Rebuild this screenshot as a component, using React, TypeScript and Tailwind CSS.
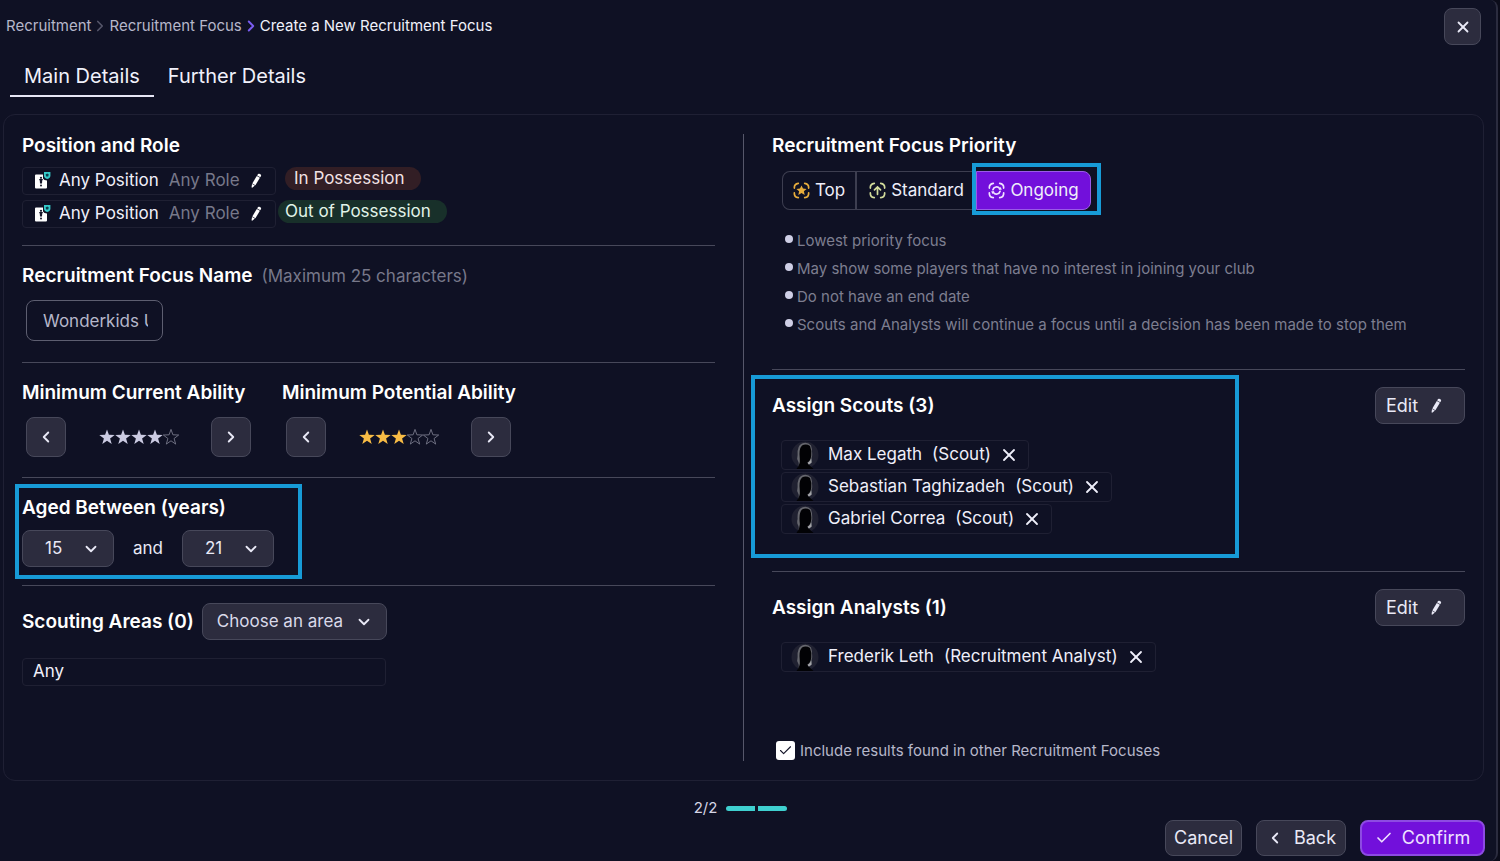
import { useState } from "react";
import type { ReactNode } from "react";
import { Check, ChevronDown, ChevronLeft, ChevronRight, X } from "lucide-react";

const buttonLook =
  "rounded-lg border border-[#47485a] bg-[#2c2c3e] text-[#e9e9f6] flex items-center justify-center";

function Pencil() {
  return (
    <svg viewBox="0 0 12 18" className="h-[18px] w-3" fill="currentColor" aria-hidden="true">
      <path d="M7.2 3.4 8 2.1Q8.6 1.4 9.4 1.8L10.7 2.6Q11.4 3.1 11 3.9L10.3 5.2Z" />
      <path d="M6.8 4 9.9 5.8 5.4 13.2 2.3 11.4Z" />
      <path d="M2 11.9 4.9 13.6 2.5 15.6Q1.6 16.2 1.6 15.1Z" />
    </svg>
  );
}

function PositionIcon() {
  return (
    <svg viewBox="0 0 17 18" className="h-[18px] w-[17px]" aria-hidden="true">
      <path d="M2 2.4H9V6.5Q10 8.4 13 8.4V15.4Q13 16.4 12 16.4H2Q1 16.4 1 15.4V3.4Q1 2.4 2 2.4Z" fill="#fff" />
      <circle cx="7" cy="5.8" r="1.1" fill="#15162a" />
      <path d="M5 7H9L8.2 8.8 8 11.4H6L5.8 8.8Z" fill="#15162a" />
      <circle cx="7" cy="13.6" r="1" fill="#15162a" />
      <path d="M10 0H16.4V3.8Q16.4 6.2 13.2 7Q10 6.2 10 3.8Z" fill="#35c9c9" />
      <path d="M13.2 1.4 14.8 2.6 14.2 4.6H12.2L11.6 2.6Z" fill="#0f3d4c" />
    </svg>
  );
}

function FocusIcon({ kind }: { kind: "top" | "standard" | "ongoing" }) {
  const color = kind === "top" ? "#e8ad3c" : kind === "standard" ? "#d3dc9b" : "#f0e4ff";
  return (
    <svg viewBox="0 0 18 18" className="h-[17px] w-[17px]" fill="none" stroke={color} strokeWidth="1.8" strokeLinecap="round" aria-hidden="true">
      <path d="M1.4 6.4Q1.2 1.9 5.6 1.4M12.4 1.4Q16.8 1.9 16.6 6.4M16.6 11.6Q16.8 16.1 12.4 16.6M5.6 16.6Q1.2 16.1 1.4 11.6" />
      {kind === "top" && (
        <path d="M9 3.6 10.6 7 14.4 7.4 11.5 9.9 12.4 13.7 9 11.7 5.6 13.7 6.5 9.9 3.6 7.4 7.4 7Z" fill={color} stroke="none" />
      )}
      {kind === "standard" && <path d="M9 13V5.6M5.8 8.4 9 5.2 12.2 8.4" />}
      {kind === "ongoing" && (
        <>
          <path d="M5.2 8.2A4 4 0 0 1 12.3 6.9M12.8 9.8A4 4 0 0 1 5.7 11.1" />
          <path d="M11.2 8.2H14.6L13.4 5.4ZM6.8 9.8H3.4L4.6 12.6Z" fill={color} stroke="none" />
        </>
      )}
    </svg>
  );
}

function Avatar() {
  return (
    <svg viewBox="0 0 28 28" className="h-7 w-7" aria-hidden="true">
      <circle cx="14" cy="14" r="13.5" fill="#202131" />
      <path d="M7 27Q8.6 22.5 7 20Q5.6 18 6.6 14Q6 4.5 11 2.4Q16.5 .4 20 4.4Q21.4 8 21.2 13Q21.4 15 20.6 17L20.4 22L17 24Z" fill="#66676e" />
      <path d="M5.5 28Q9.4 23 8.8 18Q7.6 8 11 4.6Q15 2.4 19 5Q20.8 9 20.2 15Q19.6 19.6 16.4 21.6L17.6 23.6 22.5 28Z" fill="#020205" />
      <path d="M20.2 17.6Q19.4 20.6 16.6 22L18 23.4 20.6 21.6Z" fill="#a5a6aa" />
    </svg>
  );
}

function Stars({ value, color }: { value: number; color: string }) {
  return (
    <div className="flex" role="img" aria-label={`${value} of 5 stars`}>
      {[1, 2, 3, 4, 5].map((n) => (
        <svg key={n} viewBox="0 0 16 16" className="size-4">
          <path
            d="M8 .4 9.9 5.8 15.7 6 11.1 9.5 12.7 15.1 8 11.8 3.3 15.1 4.9 9.5 .3 6 6.1 5.8Z"
            fill={n <= value ? color : "none"}
            stroke={n <= value ? "none" : "#77788a"}
            strokeWidth="0.9"
          />
        </svg>
      ))}
    </div>
  );
}

function Rating({ title, initial, color }: { title: string; initial: number; color: string }) {
  const [value, setValue] = useState(initial);
  return (
    <div>
      <h2 className="text-[19px] leading-6 font-semibold text-white">{title}</h2>
      <div className="mt-3 ml-1 flex w-[225px] items-center justify-between">
        <button aria-label={`Lower ${title}`} onClick={() => setValue(Math.max(0, value - 1))} className={`${buttonLook} size-10`}>
          <ChevronLeft size={18} strokeWidth={2.5} />
        </button>
        <Stars value={value} color={color} />
        <button aria-label={`Raise ${title}`} onClick={() => setValue(Math.min(5, value + 1))} className={`${buttonLook} size-10`}>
          <ChevronRight size={18} strokeWidth={2.5} />
        </button>
      </div>
    </div>
  );
}

function AgeSelect({ label, initial }: { label: string; initial: number }) {
  const ages = Array.from({ length: 26 }, (_, i) => i + 15);
  return (
    <div className="relative w-[92px]">
      <select
        aria-label={label}
        defaultValue={initial}
        className="h-[37px] w-full appearance-none rounded-lg border border-[#47485a] bg-[#2c2c3e] pl-[22px] text-[17px] text-[#e9e9f6]"
      >
        {ages.map((a) => (
          <option key={a}>{a}</option>
        ))}
      </select>
      <ChevronDown size={18} strokeWidth={2.4} className="pointer-events-none absolute top-[10px] right-[14px] text-[#e9e9f6]" />
    </div>
  );
}

function RoleRow({ phase, tone }: { phase: string; tone: string }) {
  return (
    <div className="flex h-7 items-start">
      <div className="flex h-7 w-[254px] items-center rounded border border-[#1f2033] pl-[11px] text-[17px]">
        <PositionIcon />
        <span className="ml-2 text-[#efeffa]">Any Position</span>
        <span className="ml-[10px] text-[#77788a]">Any Role</span>
        <button aria-label={`Edit role ${phase}`} className="ml-[10px] text-white">
          <Pencil />
        </button>
      </div>
      <span className={`flex h-[23px] items-center rounded-full text-[17px] ${tone}`}>{phase}</span>
    </div>
  );
}

function PersonChip({ name, role }: { name: string; role: string }) {
  return (
    <li className="flex h-[30px] w-fit items-center rounded border border-[#1f2033] pr-[9px] pl-[9px] text-[17px] text-[#efeffa]">
      <Avatar />
      <span className="ml-[9px]">{name}</span>
      <span className="ml-[10px]">({role})</span>
      <button aria-label={`Remove ${name}`} className="ml-2">
        <X size={20} strokeWidth={2.2} />
      </button>
    </li>
  );
}

function AssignSection({ title, children }: { title: string; children: ReactNode }) {
  return (
    <>
      <div className="flex items-center justify-between">
        <h2 className="text-[19px] leading-6 font-semibold text-white">{title}</h2>
        <button className={`${buttonLook} h-[37px] w-[90px] gap-3 pr-3 text-lg`}>
          Edit <Pencil />
        </button>
      </div>
      <ul className="mt-4 ml-[9px] flex flex-col gap-[2px]">{children}</ul>
    </>
  );
}

const notes = [
  "Lowest priority focus",
  "May show some players that have no interest in joining your club",
  "Do not have an end date",
  "Scouts and Analysts will continue a focus until a decision has been made to stop them",
];

export default function App() {
  const [include, setInclude] = useState(true);
  return (
    <div className="min-h-screen bg-[#0b0c1a] pr-[2px] font-['Inter',sans-serif]">
      <main className="min-h-screen rounded-r-lg border-r-2 border-[#2b2c3f] bg-[#0f1124] pb-1">
        <header className="flex items-start justify-between pt-2 pr-[15px] pl-[6px]">
          <nav aria-label="Breadcrumb" className="flex h-9 items-center text-[15px] text-[#b6b7ca]">
            <a href="#recruitment">Recruitment</a>
            <ChevronRight size={18} strokeWidth={2.2} className="text-[#55566a]" />
            <a href="#focus">Recruitment Focus</a>
            <ChevronRight size={18} strokeWidth={2.6} className="text-[#7a5cf0]" />
            <span className="text-[#f1f1fb]">Create a New Recruitment Focus</span>
          </nav>
          <button aria-label="Close" className={`${buttonLook} size-[37px]`}>
            <X size={18} strokeWidth={2.4} />
          </button>
        </header>

        <div role="tablist" className="mt-3 flex pl-[10px] text-xl text-[#f1f1fb]">
          <button role="tab" aria-selected="true" className="h-10 border-b-2 border-[#e6e6f5] px-[14px]">
            Main Details
          </button>
          <button role="tab" aria-selected="false" className="h-10 border-b-2 border-transparent px-[14px]">
            Further Details
          </button>
        </div>

        <section className="mt-[17px] mr-3 ml-[3px] grid grid-cols-[1fr_1px_1fr] gap-x-7 rounded-xl border border-[#1f2034] px-[18px] py-[19px]">
          <div>
            <div className="border-b border-[#47485a] pb-[17px]">
              <h2 className="text-[19px] leading-6 font-semibold text-white">Position and Role</h2>
              <div className="mt-[9px] flex flex-col gap-[5px]">
                <RoleRow phase="In Possession" tone="ml-[9px] w-[136px] bg-[#321e25] pl-[9px] text-[#f3e2e4]" />
                <RoleRow phase="Out of Possession" tone="ml-[2px] w-[169px] bg-[#18302a] pl-[7px] text-[#e1f3e8]" />
              </div>
            </div>

            <div className="border-b border-[#47485a] pt-[18px] pb-[21px]">
              <label htmlFor="focus-name" className="block text-[19px] leading-6 font-semibold text-white">
                Recruitment Focus Name
                <span className="ml-[9px] text-[17px] leading-6 font-normal text-[#77788a]">(Maximum 25 characters)</span>
              </label>
              <div className="mt-3 ml-1 h-[41px] w-[137px] rounded-lg border border-[#5d5e70] px-[14px]">
                <input
                  id="focus-name"
                  defaultValue="Wonderkids U21"
                  className="h-full w-full bg-transparent pl-[2px] text-[17px] text-[#b6b7ca] outline-none"
                />
              </div>
            </div>

            <div className="flex gap-[31px] border-b border-[#47485a] pt-[18px] pb-5">
              <Rating title="Minimum Current Ability" initial={4} color="#cbcbe2" />
              <Rating title="Minimum Potential Ability" initial={3} color="#f8bc45" />
            </div>

            <div className="border-b border-[#47485a] pt-[18px] pb-[18px]">
              <div className="relative w-fit">
                <h2 className="text-[19px] leading-6 font-semibold text-white">Aged Between (years)</h2>
                <div className="mt-[10px] flex items-center gap-[19px] text-[17px] text-[#e9e9f6]">
                  <AgeSelect label="Minimum age" initial={15} />
                  <span>and</span>
                  <AgeSelect label="Maximum age" initial={21} />
                </div>
                <div className="pointer-events-none absolute -top-3 -right-7 -bottom-3 -left-[7px] border-4 border-[#179bd7]" />
              </div>
            </div>

            <div className="flex items-center gap-2 pt-[17px]">
              <h2 className="text-[19px] leading-6 font-semibold text-white">Scouting Areas (0)</h2>
              <div className="relative w-[185px]">
                <select
                  aria-label="Choose an area"
                  className="h-[37px] w-full appearance-none rounded-lg border border-[#47485a] bg-[#2c2c3e] pl-[14px] text-[17px] text-[#dadaea]"
                >
                  <option>Choose an area</option>
                </select>
                <ChevronDown size={18} strokeWidth={2.4} className="pointer-events-none absolute top-[10px] right-[14px] text-[#e9e9f6]" />
              </div>
            </div>
            <div className="mt-[18px] flex h-7 w-[364px] items-center rounded border border-[#1f2033] pl-[10px] text-[17px] text-[#efeffa]">Any</div>
          </div>

          <div className="bg-[#56576a]" />

          <div>
            <div className="border-b border-[#47485a] pb-[30px]">
              <h2 className="text-[19px] leading-6 font-semibold text-white">Recruitment Focus Priority</h2>
              <div className="mt-[13px] ml-[10px] flex h-[39px] w-fit text-[17px] text-[#efeffa]">
                <button className="flex w-[75px] items-center justify-center gap-[5px] rounded-l-lg border border-r-2 border-[#3d3e50]">
                  <FocusIcon kind="top" /> Top
                </button>
                <button className="flex w-[119px] items-center justify-center gap-[5px] border-y border-[#3d3e50]">
                  <FocusIcon kind="standard" /> Standard
                </button>
                <div className="relative">
                  <button aria-pressed="true" className="flex h-full w-[115px] items-center justify-center gap-[5px] rounded-r-lg border border-[#9a5be8] bg-[#7210db]">
                    <FocusIcon kind="ongoing" /> Ongoing
                  </button>
                  <div className="pointer-events-none absolute -top-2 -right-[10px] -bottom-[5px] -left-1 border-4 border-[#179bd7]" />
                </div>
              </div>
              <ul className="mt-[17px] ml-[13px] text-[15px] leading-7 text-[#7d7e90]">
                {notes.map((note) => (
                  <li key={note} className="flex gap-1">
                    <span className="mt-2 size-2 shrink-0 rounded-full bg-[#cfcfe6]" />
                    {note}
                  </li>
                ))}
              </ul>
            </div>

            <div className="relative border-b border-[#47485a] pt-[17px] pb-[37px]">
              <AssignSection title="Assign Scouts (3)">
                <PersonChip name="Max Legath" role="Scout" />
                <PersonChip name="Sebastian Taghizadeh" role="Scout" />
                <PersonChip name="Gabriel Correa" role="Scout" />
              </AssignSection>
              <div className="pointer-events-none absolute top-[5px] right-[226px] bottom-[13px] -left-[21px] border-4 border-[#179bd7]" />
            </div>

            <div className="pt-[17px]">
              <AssignSection title="Assign Analysts (1)">
                <PersonChip name="Frederik Leth" role="Recruitment Analyst" />
              </AssignSection>
            </div>

            <label className="mt-[69px] ml-1 flex w-fit items-center gap-1 text-[15px] leading-5 text-[#b6b7ca]">
              <span className="relative flex size-5">
                <input
                  type="checkbox"
                  checked={include}
                  onChange={(e) => setInclude(e.target.checked)}
                  className="size-[19px] appearance-none rounded-[3px] bg-white"
                />
                {include && <Check size={15} strokeWidth={1.8} className="pointer-events-none absolute top-[2px] left-[2px] text-[#15162a]" />}
              </span>
              Include results found in other Recruitment Focuses
            </label>
          </div>
        </section>

        <footer className="pt-[15px] pr-[11px]">
          <div className="flex h-6 items-center justify-center gap-[3px] pr-1 text-[15px] text-[#d5d5e6]">
            <span className="mr-[6px]">2/2</span>
            <span className="h-[5px] w-[29px] rounded-l-full bg-[#3fd0d0]" />
            <span className="h-[5px] w-[29px] rounded-r-full bg-[#3fd0d0]" />
          </div>
          <div className="flex h-9 justify-end gap-[14px] text-lg">
            <button className={`${buttonLook} w-[77px]`}>Cancel</button>
            <button className={`${buttonLook} w-[90px] gap-[10px]`}>
              <ChevronLeft size={18} strokeWidth={2.4} /> Back
            </button>
            <button className="flex w-[125px] items-center justify-center gap-[9px] rounded-lg border-2 border-[#8d4ae2] bg-[#7210db] text-[#efe2ff]">
              <Check size={18} strokeWidth={2.2} /> Confirm
            </button>
          </div>
        </footer>
      </main>
    </div>
  );
}
